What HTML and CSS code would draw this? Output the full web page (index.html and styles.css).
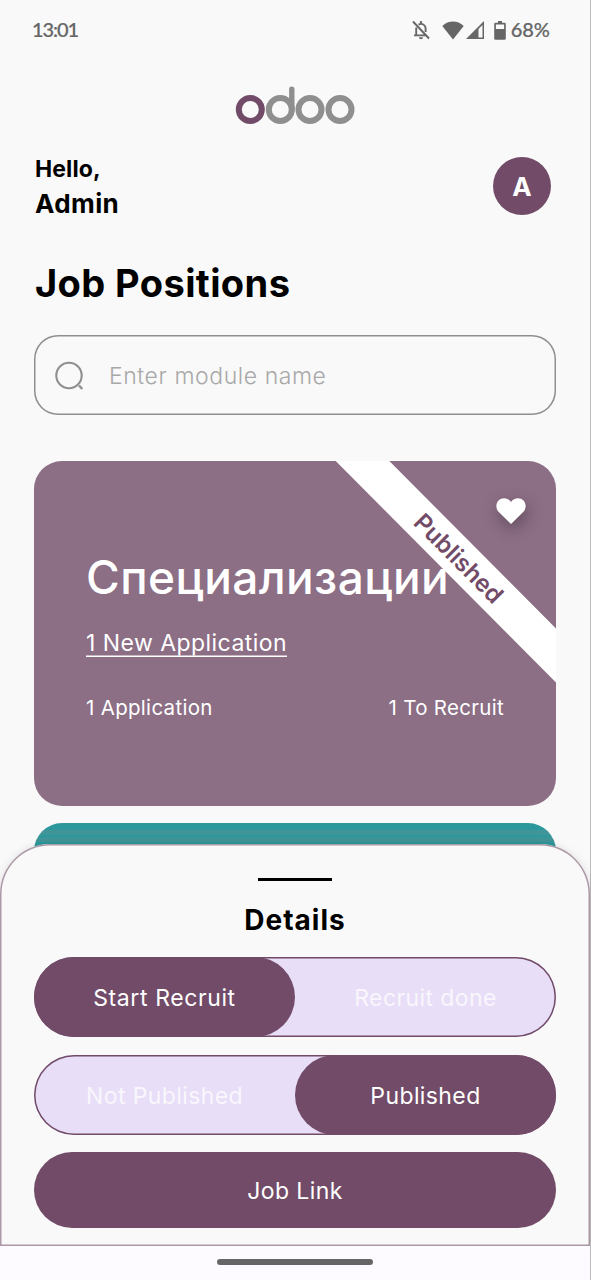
FILE: index.html
```html
<!DOCTYPE html>
<html lang="en">
<head>
<meta charset="utf-8">
<title>Job Positions</title>
<link rel="stylesheet" href="styles.css">
</head>
<body>
<div class="screen">
  <header class="status">
    <span class="time">13:01</span>
    <div class="indicators">
      <svg class="ic-bell" width="18" height="20" viewBox="0 0 18 20" fill="none" stroke="#666" stroke-width="1.9">
        <path d="M1 1.5 17 18.5M4.2 7.5V15.2M2 15.4H14M6.5 4.6C10 2.6 13.6 5 13.6 8.6V12M9 1V4"/>
        <path d="M7 17.3h4a2 2 0 0 1-4 0z" fill="#666" stroke="none"/>
      </svg>
      <svg class="ic-wifi" width="22" height="19" viewBox="0 0 22 19"><path d="M.3 5C6.500-.9 15.500-.9 21.700 5L11 18.500z" fill="#666"/></svg>
      <svg class="ic-cell" width="19" height="18" viewBox="0 0 19 18"><path fill-rule="evenodd" d="M0 18 18 0V18zM12.500 8V16.500H16.500V4z" fill="#666"/></svg>
      <svg class="ic-batt" width="12" height="19" viewBox="0 0 12 19"><path fill-rule="evenodd" d="M4 0h4v1.800h2.500q1.300 0 1.300 1.300V17.500q0 1.300-1.300 1.300H1.500Q.2 18.800.2 17.500V3.100q0-1.300 1.300-1.300H4zM1.900 3.600V8H10.100V3.600z" fill="#666"/></svg>
      <span class="percent">68%</span>
    </div>
  </header>

  <div class="logo">
    <svg width="120" height="40" viewBox="0 0 120 40" fill="none" stroke="#8f8f8f" stroke-width="6" role="img" aria-label="odoo">
      <circle cx="45.300" cy="24.500" r="11.500"/>
      <path d="M56.800 25V4.300" stroke-width="5.400" stroke-linecap="round"/>
      <circle cx="75" cy="24.500" r="11.500"/>
      <circle cx="105" cy="24.500" r="11.500"/>
      <circle cx="15.300" cy="24.500" r="11.500" stroke="#714b67"/>
    </svg>
  </div>

  <section class="greeting">
    <div>
      <p class="hello">Hello,</p>
      <p class="name">Admin</p>
    </div>
    <div class="avatar">A</div>
  </section>

  <h1 class="title">Job Positions</h1>

  <div class="search">
    <svg width="30" height="30" viewBox="0 0 30 30" fill="none" stroke="#8f8f8f" stroke-width="2.100"><circle cx="14" cy="14.500" r="12.700"/><path d="M24 24.500 27.300 28" stroke-width="2.400"/></svg>
    <span class="placeholder">Enter module name</span>
  </div>

  <article class="card">
    <h2 class="job">Специализации</h2>
    <div><a class="new-app">1 New Application</a></div>
    <div class="stats"><span class="apps">1 Application</span><span class="recruit">1 To Recruit</span></div>
    <div class="ribbon"><span>Published</span></div>
    <svg class="heart" width="30" height="28" viewBox="0 0 30 28"><path d="M15 27 3.300 15.600C.9 13.200.4 10.900.4 8.900.4 4.500 3.800 1.200 8 1.200c2.700 0 5.300 1.300 7 3.700 1.700-2.400 4.300-3.700 7-3.700 4.200 0 7.600 3.300 7.600 7.700 0 2-.5 4.300-2.900 6.700z" fill="#fff"/></svg>
  </article>
  <article class="card next-card"></article>

  <section class="sheet">
    <div class="handle"></div>
    <h3 class="details">Details</h3>
    <div class="switch">
      <span class="option active start">Start Recruit</span>
      <span class="option done">Recruit done</span>
    </div>
    <div class="switch">
      <span class="option unpub">Not Published</span>
      <span class="option active pub">Published</span>
    </div>
    <div class="job-link"><span>Job Link</span></div>
  </section>
  <div class="navbar"><div class="nav-pill"></div></div>
</div>
</body>
</html>
```
FILE: styles.css
```css
* { box-sizing: border-box; }
body { margin: 0; font-family: Inter, "Liberation Sans", sans-serif; color: #000; }
p, h1, h2, h3 { margin: 0; white-space: nowrap; }
svg { display: block; flex: none; }

.screen {
  position: relative;
  width: 591px;
  height: 1280px;
  overflow: hidden;
  background: #f9f9f9;
  padding: 0 35px 0 34px;
  box-shadow: inset -1px 0 #bbb;
}

.status {
  display: flex;
  justify-content: space-between;
  align-items: center;
  height: 60px;
  margin: 0 6px 0 -2px;
  color: #666;
  font: 500 20px/24px Lato, sans-serif;
  -webkit-text-stroke: .2px #666;
}
.time { letter-spacing: -1.1px; padding-bottom: 2px; }
.indicators { display: flex; align-items: center; }
.ic-wifi { margin-left: 12px; }
.ic-cell { margin-left: 2px; }
.ic-batt { margin-left: 9px; }
.percent { margin-left: 5px; padding-bottom: 2px; }

.logo { display: flex; justify-content: center; height: 40px; margin-top: 25px; }

.greeting { display: flex; justify-content: space-between; margin-top: 27px; height: 71px; }
.hello { font-weight: 700; font-size: 23px; line-height: 34px; letter-spacing: .1px; padding-left: 1px; }
.name { font-weight: 700; font-size: 26px; line-height: 36px; letter-spacing: .4px; padding-left: 1px; }
.avatar {
  width: 58px; height: 58px; margin: 4.500px 5px 0 0;
  border-radius: 50%;
  background: #714b67;
  color: #fff;
  font-weight: 700; font-size: 26px; line-height: 59px;
  text-align: center;
}

.title { margin-top: 36px; height: 48px; padding-left: 1px; font-weight: 700; font-size: 38px; line-height: 48px; letter-spacing: .4px; }

.search {
  display: flex;
  align-items: center;
  height: 80px;
  margin-top: 28px;
  padding: 1px 0 0 21px;
  box-shadow: inset 0 0 0 1.500px #8f8f8f;
  border-radius: 24px;
}
.placeholder { margin-left: 24px; padding-top: 1px; color: #a8a8a8; font-weight: 300; font-size: 23px; letter-spacing: .57px; }

.card {
  position: relative;
  height: 345px;
  margin-top: 46px;
  padding: 91px 52px 0;
  overflow: hidden;
  border-radius: 28px;
  background: #8c6e85;
  color: #fff;
}
.next-card {
  margin-top: 17px;
  background: linear-gradient(#2c989b 0 7px, #409598 7px 12px, #2c989b 12px 14px, #409598 14px 19px, #2c989b 19px);
}
.job { height: 50px; font-weight: 500; font-size: 46px; line-height: 50px; letter-spacing: .4px; }
.new-app {
  display: inline-block;
  margin-top: 27px;
  height: 28px;
  box-shadow: inset 0 -1.500px #fff;
  font-size: 23px;
  line-height: 28px;
  letter-spacing: .45px;
}
.stats { display: flex; justify-content: space-between; margin-top: 37px; font-size: 20.500px; line-height: 28px; letter-spacing: .3px; }
.ribbon {
  position: absolute;
  left: 225px; top: 78px;
  width: 400px; height: 38px;
  transform: rotate(45.150deg);
  background: #fff;
  color: #714b67;
  text-align: center;
  font-weight: 600; font-size: 24px; line-height: 39px;
}
.heart { position: absolute; left: 462px; top: 36px; overflow: visible; filter: drop-shadow(2px 6px 8px rgba(0, 0, 0, .3)); }

.sheet {
  position: absolute;
  left: 0; top: 844px;
  width: 590px; height: 402px;
  padding: 34px 34px 0;
  box-shadow: inset 0 0 0 1.500px #ab99a7, 0 0 8px rgba(0, 0, 0, .1);
  border-radius: 50px 50px 0 0;
  background: #f9f9f9;
}
.handle { width: 74px; height: 3px; margin: 0 auto; background: #000; }
.details { margin-top: 21px; height: 36px; text-align: center; font-weight: 700; font-size: 28px; line-height: 36px; letter-spacing: 1px; }
.switch {
  display: grid;
  grid-template-columns: 1fr 1fr;
  height: 80px;
  margin-bottom: 17.500px;
  border-radius: 40px;
  background: #e8def8;
  box-shadow: inset 0 0 0 1.500px #714b67;
  color: #f9f6fc;
}
.details + .switch { margin-top: 19px; }
.option { height: 80px; border-radius: 40px; text-align: center; font-size: 23px; line-height: 83px; letter-spacing: .4px; }
.start { letter-spacing: .6px; }
.active { background: #714b67; color: #fff; }
.job-link { height: 76px; border-radius: 38px; background: #714b67; color: #fff; text-align: center; font-size: 23px; line-height: 79px; letter-spacing: .4px; }

.navbar {
  position: absolute;
  left: 0; top: 1246px;
  display: flex;
  justify-content: center;
  width: 590px; height: 34px;
  padding-top: 13px;
  background: #fdfbff;
}
.nav-pill { width: 156px; height: 6px; border-radius: 3px; background: #666; }
```
